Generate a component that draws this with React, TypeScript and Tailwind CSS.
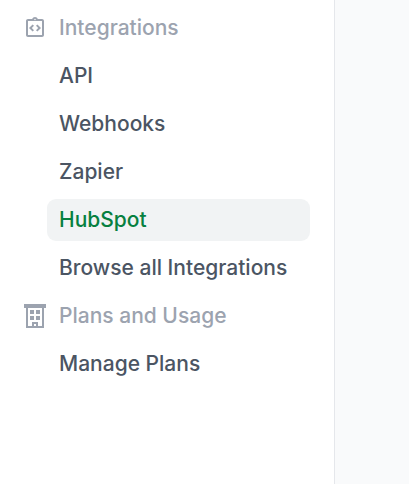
import React from 'react';

interface NavSection {
  title: string;
  icon: React.ReactNode;
  items: string[];
}

function IntegrationIcon() {
  return (
    <svg width="24" height="24" viewBox="0 0 24 24" fill="currentColor">
      <path d="M11 14.17 8.83 12 11 9.83 9.59 8.41 6 12l3.59 3.59zM14.41 15.59 18 12l-3.59-3.59L13 9.83 15.17 12 13 14.17z" />
      <path d="M19 3h-4.18C14.4 1.84 13.3 1 12 1s-2.4.84-2.82 2H5c-1.1 0-2 .9-2 2v14c0 1.1.9 2 2 2h14c1.1 0 2-.9 2-2V5c0-1.1-.9-2-2-2zm-7-.25c.41 0 .75.34.75.75s-.34.75-.75.75-.75-.34-.75-.75.34-.75.75-.75zM19 19H5V5h14v14z" />
    </svg>
  );
}

function BuildingIcon() {
  return (
    <svg width="24" height="24" viewBox="0 0 24 24" fill="currentColor">
      <path
        fillRule="evenodd"
        d="M1 0h22v4h-2v20H3V4H1zM5 4v18h4v-4h6v4h4V4zM11 20v2h2v-2z"
      />
      <path d="M7 6h4v4H7zM13 6h4v4h-4zM7 12h4v4H7zM13 12h4v4h-4z" />
    </svg>
  );
}

const sections: NavSection[] = [
  {
    title: 'Integrations',
    icon: <IntegrationIcon />,
    items: ['API', 'Webhooks', 'Zapier', 'HubSpot', 'Browse all Integrations']
  },
  {
    title: 'Plans and Usage',
    icon: <BuildingIcon />,
    items: ['Manage Plans']
  }
];

export default function App() {
  const activeItem = 'HubSpot';

  return (
    <div className="flex h-screen overflow-hidden bg-[#f9fafb] font-['Inter',sans-serif] text-[21px] leading-[30px] font-medium">
      <nav className="w-[335px] shrink-0 border-r border-gray-200 bg-white pt-[7px] pr-6 pl-[23px]">
        {sections.map((section) => (
          <div key={section.title}>
            <div className="mb-1.5 flex h-[42px] items-center gap-3 text-[#9ca3af]">
              {section.icon}
              <span>{section.title}</span>
            </div>
            <ul className="ml-6">
              {section.items.map((item) => (
                <li key={item} className="mb-1.5">
                  <a
                    className={`flex h-[42px] items-center rounded-[9px] px-3 whitespace-nowrap ${
                      item === activeItem ? 'bg-[#f1f3f4] text-[#078040]' : 'text-[#4b5563]'
                    }`}
                  >
                    {item}
                  </a>
                </li>
              ))}
            </ul>
          </div>
        ))}
      </nav>
      <main className="flex-1" />
    </div>
  );
}
